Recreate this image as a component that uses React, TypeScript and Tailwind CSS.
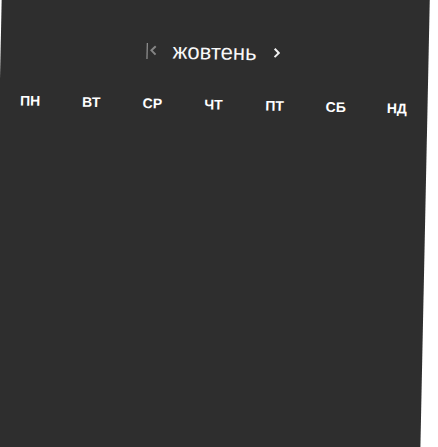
const weekdays = ["ПН", "ВТ", "СР", "ЧТ", "ПТ", "СБ", "НД"];

function Chevron({ points }: { points: string }) {
  return (
    <svg
      viewBox="0 0 8 12"
      className="h-3 w-2"
      fill="none"
      stroke="currentColor"
      strokeWidth={2}
      aria-hidden="true"
    >
      <polyline points={points} />
    </svg>
  );
}

export default function App() {
  return (
    <main className="flex h-screen overflow-hidden bg-white font-['Liberation_Sans',Arial,sans-serif]">
      <section className="-mt-4 mr-2 -mb-8 ml-0.5 flex-1 origin-top-left rotate-[1.2deg] bg-[#2e2e2e] pt-12 text-white">
        <header className="flex h-8 items-center justify-center gap-3.5">
          <button
            type="button"
            aria-label="Попередній місяць"
            className="flex h-4 w-3 items-center border-l border-[#a8a8a8] pl-0.5 text-[#858585]"
          >
            <Chevron points="6,1 1.8,5.2 6,9.4" />
          </button>
          <h1 className="text-[22px] leading-8 text-[#f8f8f8]">жовтень</h1>
          <button
            type="button"
            aria-label="Наступний місяць"
            className="flex h-4 w-3 items-center justify-center text-[#f0f0f0]"
          >
            <Chevron points="2,1 6.2,5.2 2,9.4" />
          </button>
        </header>
        <table className="mt-6 w-full table-fixed">
          <thead>
            <tr>
              {weekdays.map((day) => (
                <th
                  key={day}
                  scope="col"
                  className="p-0 text-center text-sm leading-6 font-bold"
                >
                  {day}
                </th>
              ))}
            </tr>
          </thead>
        </table>
      </section>
    </main>
  );
}
